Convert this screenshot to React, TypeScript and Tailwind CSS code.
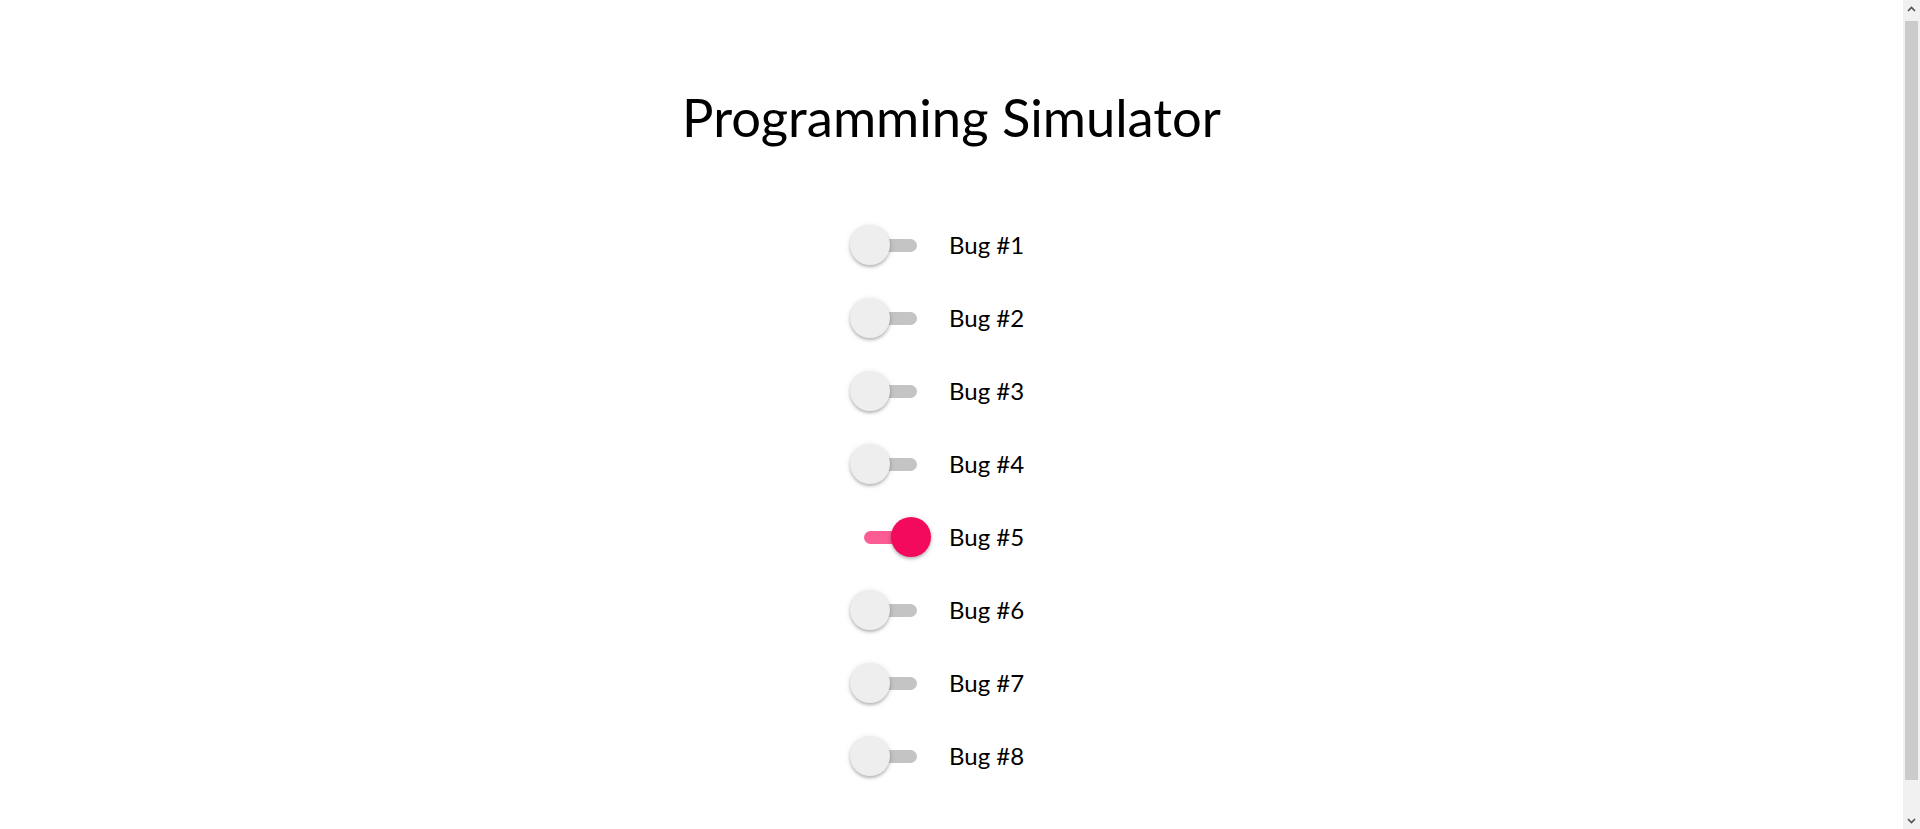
import { useState } from "react";

function Toggle({ checked, onChange }: { checked: boolean; onChange: () => void }) {
  return (
    <button
      type="button"
      role="switch"
      aria-checked={checked}
      onClick={onChange}
      className="relative h-10 w-[81px] shrink-0 cursor-pointer"
    >
      <span
        className={`absolute left-[14px] top-[13.5px] h-[13px] w-[53px] rounded-full ${
          checked ? "bg-[#fc5c93]" : "bg-[#c4c4c4]"
        }`}
      />
      <span
        className={`absolute top-0 h-10 w-10 rounded-full shadow-[0_2px_3px_rgba(0,0,0,0.22),0_1px_6px_rgba(0,0,0,0.12)] transition-all ${
          checked ? "left-[41px] bg-[#f30a5c]" : "left-0 bg-[#eeeeee]"
        }`}
      />
    </button>
  );
}

// fake page scrollbar, the reference shows the classic one
function ScrollBar() {
  return (
    <div className="flex h-screen w-[17px] shrink-0 flex-col bg-[#f1f1f1]">
      <div className="flex h-[17px] items-center justify-center">
        <svg width="9" height="6" viewBox="0 0 9 6">
          <polyline points="1,5 4.5,1.5 8,5" fill="none" stroke="#505050" strokeWidth="1.6" />
        </svg>
      </div>
      <div className="flex-1 px-[2px] pt-[4px] pb-[32px]">
        <div className="h-full w-full bg-[#cbcbcb]" />
      </div>
      <div className="flex h-[17px] items-center justify-center">
        <svg width="9" height="6" viewBox="0 0 9 6">
          <polyline points="1,1 4.5,4.5 8,1" fill="none" stroke="#505050" strokeWidth="1.6" />
        </svg>
      </div>
    </div>
  );
}

export default function App() {
  const [bugs, setBugs] = useState<boolean[]>([false, false, false, false, true, false, false, false]);

  const toggle = (i: number) => {
    setBugs((prev) => prev.map((b, idx) => (idx === i ? !b : b)));
  };

  return (
    <div className="flex h-screen overflow-hidden bg-white font-['Lato',sans-serif] text-black">
      <main className="flex-1 pt-[91px] pb-[74px]">
        <h1 className="text-center text-[52.5px] leading-none font-normal">Programming Simulator</h1>

        <div className="mx-auto mt-[65px] flex w-[203px] flex-col">
          {bugs.map((on, i) => (
            <label key={i} className="flex h-[73px] items-center gap-[18px]">
              <Toggle checked={on} onChange={() => toggle(i)} />
              <span className="text-[24px] leading-none">Bug #{i + 1}</span>
            </label>
          ))}
        </div>
      </main>
      <ScrollBar />
    </div>
  );
}
